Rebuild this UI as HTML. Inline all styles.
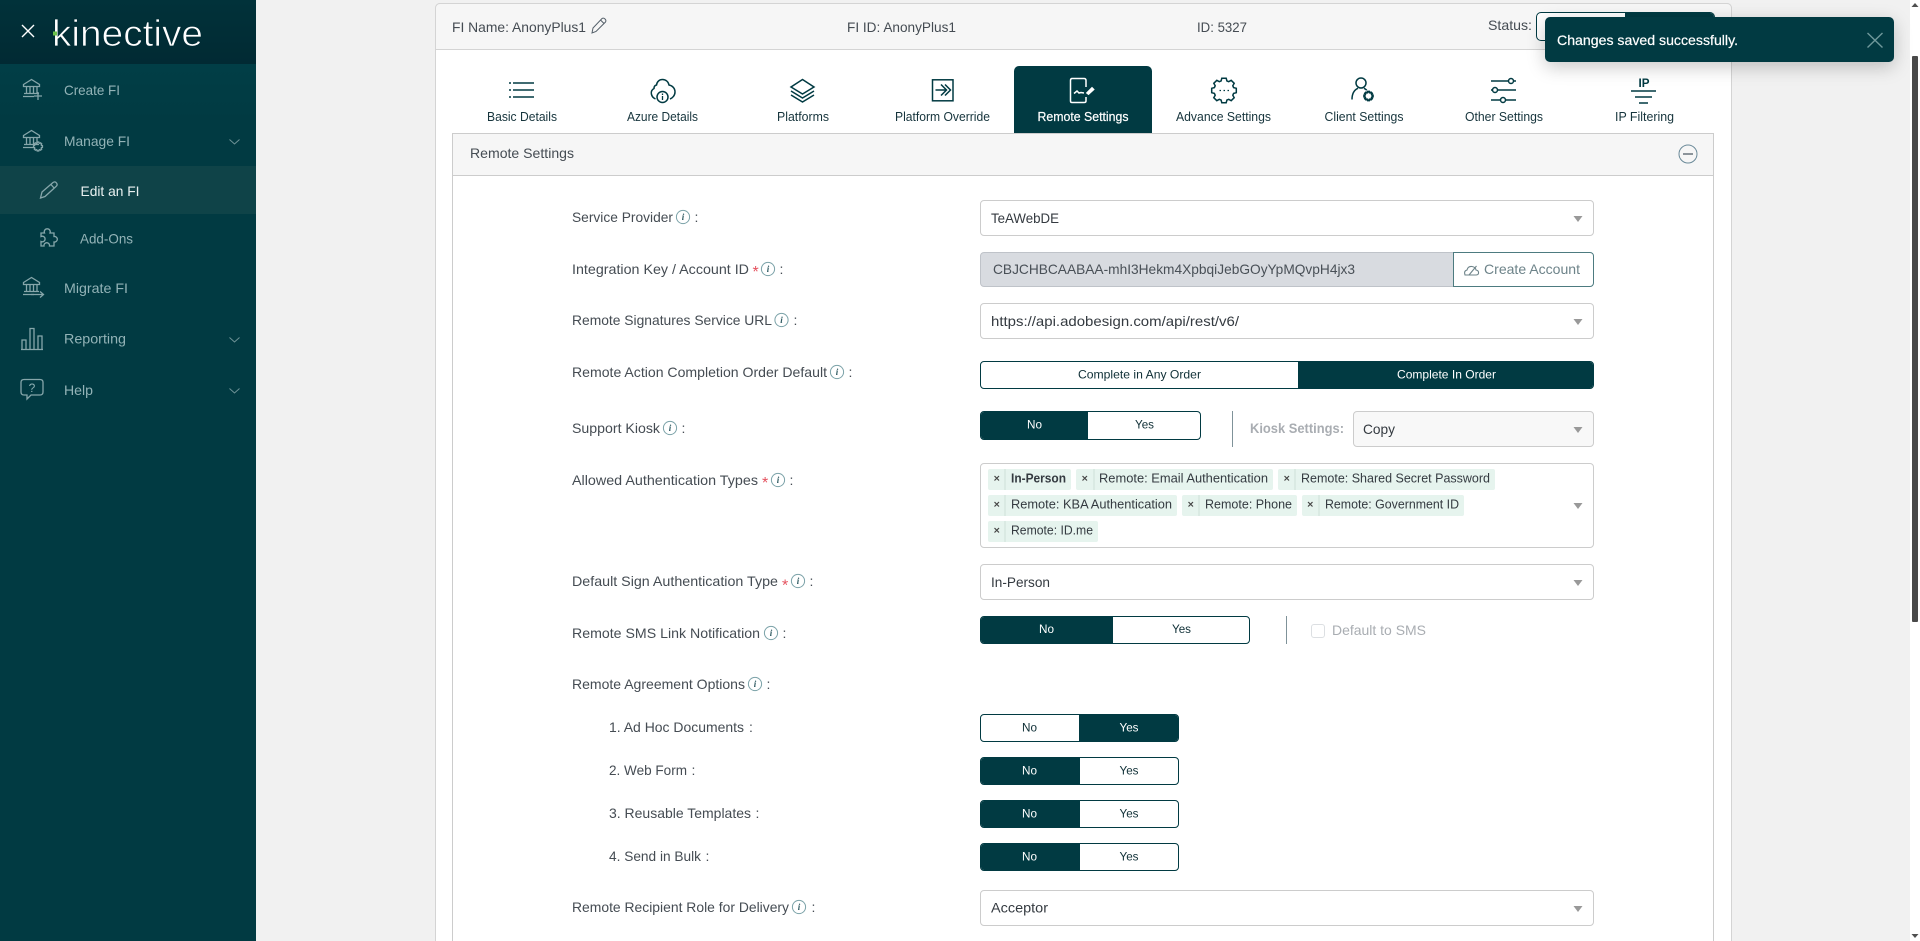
<!DOCTYPE html>
<html><head><meta charset="utf-8"><title>Kinective</title>
<style>
html,body{margin:0;padding:0;width:1920px;height:941px;overflow:hidden;background:#f1f1f1;font-family:"Liberation Sans",sans-serif}
#root{position:relative;width:1920px;height:941px;overflow:hidden;background:#f1f1f1}
.b{position:absolute;box-sizing:border-box}
.sel{border:1px solid #ccc;border-radius:4px;background:#fff;left:980px;width:614px;height:36px}
.tg{border:1px solid #013a42;border-radius:4px;background:#fff;overflow:hidden;height:28px}
.tg i{position:absolute;top:-1px;height:28px;background:#013a42;display:block}
svg{position:absolute;left:0;top:0}
text{font-family:"Liberation Sans",sans-serif}
.l text,text.l{font-size:14px;fill:#454c53}
.m text{font-size:14px;fill:#93b3b7}
.tab text{font-size:12.5px;fill:#16343c}
.tag text{font-size:12.5px;fill:#343a40}
.seg text{font-size:12px;fill:#0f2f36}
.v text{font-size:14px;fill:#343a40}
.ic{fill:none;stroke:#013a42;stroke-width:1.5}
.si{fill:none;stroke:#86a6aa;stroke-width:1.3}
</style></head><body><div id="root">
<!-- sidebar -->
<div class="b" style="left:0;top:0;width:256px;height:941px;background:#013a42"></div>
<div class="b" style="left:0;top:0;width:256px;height:64px;background:linear-gradient(#01323a,#012a33)"></div>
<div class="b" style="left:0;top:64px;width:256px;height:60px;background:linear-gradient(#013e46,#013a42)"></div>
<div class="b" style="left:0;top:166px;width:256px;height:48px;background:#0f4348"></div>
<!-- main -->
<div class="b" style="left:435px;top:3px;width:1297px;height:960px;background:#fff;border:1px solid #d4d4d4;border-radius:5px"></div>
<div class="b" style="left:435px;top:3px;width:1297px;height:47px;background:#f6f6f6;border:1px solid #d4d4d4;border-radius:5px 5px 0 0"></div>
<div class="b" style="left:1536px;top:12px;width:179px;height:29px;background:#fff;border:1px solid #013a42;border-radius:5px;overflow:hidden"><div class="b" style="left:88px;top:0;width:91px;height:29px;background:#013a42"></div></div>
<div class="b" style="left:1014px;top:66px;width:138px;height:68px;background:#013a42;border-radius:5px 5px 0 0"></div>
<div class="b" style="left:452px;top:133px;width:1262px;height:840px;background:#fff;border:1px solid #ccc"></div>
<div class="b" style="left:452px;top:133px;width:1262px;height:43px;background:#f6f6f6;border:1px solid #ccc"></div>
<!-- form boxes -->
<div class="b sel" style="top:200px"></div>
<div class="b" style="left:980px;top:252px;width:474px;height:35px;background:#d8dbe0;border:1px solid #bfc3c9;border-radius:4px 0 0 4px"></div>
<div class="b" style="left:1453px;top:252px;width:141px;height:35px;background:#fff;border:1px solid #4d7b80;border-radius:0 4px 4px 0"></div>
<div class="b sel" style="top:303px"></div>
<div class="b tg" style="left:980px;top:361px;width:614px"><i style="left:317px;width:297px"></i></div>
<div class="b tg" style="left:980px;top:411px;width:221px;height:29px"><i style="left:-1px;width:108px;height:29px"></i></div>
<div class="b" style="left:1232px;top:411px;width:1px;height:36px;background:#7f9299"></div>
<div class="b sel" style="left:1353px;top:411px;width:241px;background:#f8f8f8"></div>
<div class="b sel" style="top:463px;height:85px"></div>
<div class="b sel" style="top:564px"></div>
<div class="b tg" style="left:980px;top:616px;width:270px"><i style="left:-1px;width:133px"></i></div>
<div class="b" style="left:1286px;top:616px;width:1px;height:28px;background:#7f9299"></div>
<div class="b" style="left:1311px;top:624px;width:14px;height:14px;border:1px solid #dcdfe2;border-radius:3px;background:#fff"></div>
<div class="b tg" style="left:980px;top:714px;width:199px"><i style="left:98px;width:101px"></i></div>
<div class="b tg" style="left:980px;top:757px;width:199px"><i style="left:-1px;width:100px"></i></div>
<div class="b tg" style="left:980px;top:800px;width:199px"><i style="left:-1px;width:100px"></i></div>
<div class="b tg" style="left:980px;top:843px;width:199px"><i style="left:-1px;width:100px"></i></div>
<div class="b sel" style="top:890px"></div>
<!-- scrollbar -->
<div class="b" style="left:1910px;top:0;width:10px;height:941px;background:#fff"></div>
<div class="b" style="left:1912px;top:56px;width:6px;height:566px;background:#4a4a4a;border-radius:1px"></div>

<svg width="1920" height="941" viewBox="0 0 1920 941">
<defs>
<path id="gear" d="M12.3-2.2L12.3 2.2 9.6 2.9 8.8 4.7 10.2 7.2 7.2 10.2 4.7 8.8 2.9 9.6 2.2 12.3-2.2 12.3-2.9 9.6-4.7 8.8-7.2 10.2-10.2 7.2-8.8 4.7-9.6 2.9-12.3 2.2-12.3-2.2-9.6-2.9-8.8-4.7-10.2-7.2-7.2-10.2-4.7-8.8-2.9-9.6-2.2-12.3 2.2-12.3 2.9-9.6 4.7-8.8 7.2-10.2 10.2-7.2 8.8-4.7 9.6-2.9Z"/>
<g id="info"><circle cx="0" cy="0" r="6.6" fill="none" stroke="#7ba2a8" stroke-width="1"/><text x="0" y="3.2" text-anchor="middle" style="font:italic bold 9px 'Liberation Serif',serif;fill:#2f5a62">i</text></g>
<path id="arr" d="M-4.5-3H4.5L0 3Z" fill="#999"/>
<g id="bank"><path d="M23.5 6.5L31.5 1.5 39.5 6.5V8.5H23.5Z"/><path d="M26.5 8.5V15.5M30 8.5V15.5M33.5 8.5V15.5M37 8.5V15.5M24 15.5H39M23 18.5H34"/></g>
</defs>
<!-- sidebar content -->
<path d="M22 25L34 37M34 25L22 37" stroke="#fff" stroke-width="1.4" fill="none"/>
<text x="52" y="46" textLength="151" lengthAdjust="spacingAndGlyphs" style="font-size:37px;fill:#fff;stroke:#012c35;stroke-width:.8">kinective</text>
<rect x="53" y="31.5" width="4" height="4" fill="#6cc24a"/>
<g class="m">
<text x="64" y="95" textLength="56" lengthAdjust="spacingAndGlyphs">Create FI</text>
<text x="64" y="146" textLength="66" lengthAdjust="spacingAndGlyphs">Manage FI</text>
<text x="80.5" y="196" textLength="59" lengthAdjust="spacingAndGlyphs" style="fill:#e8f0f0">Edit an FI</text>
<text x="80" y="243.5" textLength="53" lengthAdjust="spacingAndGlyphs">Add-Ons</text>
<text x="64" y="293" textLength="64" lengthAdjust="spacingAndGlyphs">Migrate FI</text>
<text x="64" y="343.5" textLength="62" lengthAdjust="spacingAndGlyphs">Reporting</text>
<text x="64" y="395" textLength="29" lengthAdjust="spacingAndGlyphs">Help</text>
</g>
<use href="#bank" y="78" class="si"/><path class="si" d="M38 92V100M34 96H42"/>
<use href="#bank" y="129" class="si"/><use href="#gear" class="si" transform="translate(38 146.5) scale(.36)" style="stroke-width:3.8"/>
<use href="#bank" y="276" class="si"/><path class="si" d="M31 294.5H43M40 291.5L43.5 294.5 40 297.5"/>
<path class="si" d="M21 349.5H43M22 349V340H26V349M30 349V328.5H34V349M38 349V336H42V349"/>
<path class="si" d="M24 379.5H40Q43 379.5 43 382.5V392Q43 395 40 395H31L27 399V395H24Q21 395 21 392V382.5Q21 379.5 24 379.5Z"/>
<text x="32" y="392" text-anchor="middle" style="font-size:12px;fill:#8fb0b4">?</text>
<path class="si" d="M40.5 198L42 192 53 182.5Q55 181 56.5 183T56 186.5L45 196.5ZM51 184.5L54.5 188.5"/>
<path class="si" d="M41 233H44.5A3 3 0 1 1 50 233H54V236.5A2.8 2.8 0 1 1 54 242V246H49.500A2.8 2.8 0 1 0 44 246H41V241.5A2.8 2.8 0 1 0 41 236.500Z"/>
<path d="M229.5 139.5L234.5 144 239.5 139.5M229.5 337.5L234.5 342 239.5 337.5M229.5 388.5L234.5 393 239.5 388.5" fill="none" stroke="#6f9397" stroke-width="1"/>
<!-- header -->
<g class="l">
<text x="452" y="32" textLength="134" lengthAdjust="spacingAndGlyphs">FI Name: AnonyPlus1</text>
<text x="847" y="32" textLength="109" lengthAdjust="spacingAndGlyphs">FI ID: AnonyPlus1</text>
<text x="1197" y="32" textLength="50" lengthAdjust="spacingAndGlyphs">ID: 5327</text>
<text x="1488" y="30" textLength="44" lengthAdjust="spacingAndGlyphs">Status:</text>
<text x="470" y="158" textLength="104" lengthAdjust="spacingAndGlyphs">Remote Settings</text>
</g>
<path d="M592 33L593 28 602 18.5Q603.5 17.5 605 19T605.5 22L596 31.5ZM600.5 20L604 23.5" fill="none" stroke="#55606a" stroke-width="1"/>
<!-- tabs -->
<g class="tab">
<text x="487" y="121" textLength="70" lengthAdjust="spacingAndGlyphs">Basic Details</text>
<text x="627" y="121" textLength="71" lengthAdjust="spacingAndGlyphs">Azure Details</text>
<text x="777" y="121" textLength="52" lengthAdjust="spacingAndGlyphs">Platforms</text>
<text x="895" y="121" textLength="95" lengthAdjust="spacingAndGlyphs">Platform Override</text>
<text x="1037.5" y="121" textLength="91" lengthAdjust="spacingAndGlyphs" style="fill:#fff;stroke:#fff;stroke-width:.2">Remote Settings</text>
<text x="1176" y="121" textLength="95" lengthAdjust="spacingAndGlyphs">Advance Settings</text>
<text x="1324.5" y="121" textLength="79" lengthAdjust="spacingAndGlyphs">Client Settings</text>
<text x="1465" y="121" textLength="78" lengthAdjust="spacingAndGlyphs">Other Settings</text>
<text x="1615" y="121" textLength="59" lengthAdjust="spacingAndGlyphs">IP Filtering</text>
</g>
<path class="ic" d="M509 83H511M513 83H534M509 90H511M513 90H534M509 97H511M513 97H534"/>
<path class="ic" d="M655.5 99C651 97 649.5 91 654 88.5 654 86.5 655 85.3 656.5 85 657 81.5 659.5 79.5 662.5 79.5 666 79.5 668.5 82 669 85 672 85.5 675 88 675 92 675 95.5 672.5 98 670 99"/>
<circle class="ic" cx="662.5" cy="97" r="5.5"/><path class="ic" d="M662.5 96V100M662.5 93.5V95" style="stroke-width:1.3"/>
<path class="ic" d="M802.5 79.5L814 87 802.5 94 791 87ZM791 91L802.5 98 814 91M791 95L802.5 102 814 95"/>
<rect class="ic" x="932.5" y="79.8" width="20.5" height="21"/><path class="ic" d="M935.5 90H946M941 84.5L946.5 90 941 95.5M945 84.5L950.5 90 945 95.5"/>
<path class="ic" style="stroke:#fff" d="M1086 87V80.5Q1086 78.5 1084 78.5H1072Q1070.5 78.5 1070.5 80.5V101Q1070.5 102.5 1072 102.5H1084Q1086 102.5 1086 101V97M1074 93.5L1077 91 1079 93 1081 92.5 1084 93"/>
<path d="M1086.5 93L1092 87.5 1094 89.5 1088.5 94.5Z" fill="#fff" stroke="#fff"/>
<use href="#gear" class="ic" transform="translate(1224 90.5)"/>
<path d="M1219.5 90.5h1.5M1223.5 90.5h1.5M1227.5 90.5h1.5" stroke="#013a42" stroke-width="1.3"/>
<circle class="ic" cx="1361" cy="83" r="5"/><path class="ic" d="M1352 99.5C1352 93.5 1354.5 89.8 1358 88.3M1364 88.3C1365 88.8 1366 89.5 1366.8 90.2"/>
<use href="#gear" class="ic" transform="translate(1368.5 96) scale(.36)" style="stroke-width:5"/>
<path class="ic" d="M1491 81H1508.5M1513.5 81H1516M1491 90H1492.5M1497.5 90H1516M1491 100H1500.5M1505.5 100H1516"/>
<circle class="ic" cx="1511" cy="81" r="2.5"/><circle class="ic" cx="1495" cy="90" r="2.5"/><circle class="ic" cx="1503" cy="100" r="2.5"/>
<text x="1644" y="87" text-anchor="middle" textLength="11" lengthAdjust="spacingAndGlyphs" style="font-size:11.5px;font-weight:bold;fill:#013a42">IP</text>
<path d="M1631 91H1656M1635 97H1652M1639 103H1648" stroke="#013a42" stroke-width="1.5" fill="none"/>
<circle cx="1688" cy="154" r="9" fill="none" stroke="#6b8a99" stroke-width="1"/><path d="M1683 154H1693" stroke="#808a90" stroke-width="1.8"/>
<g transform="translate(0,-1)">
<!-- labels -->
<g class="l">
<text x="572" y="223" textLength="101" lengthAdjust="spacingAndGlyphs">Service Provider</text><text x="694.5" y="223">:</text>
<text x="572" y="275" textLength="177" lengthAdjust="spacingAndGlyphs">Integration Key / Account ID</text><text x="779.5" y="275">:</text>
<text x="572" y="326" textLength="200" lengthAdjust="spacingAndGlyphs">Remote Signatures Service URL</text><text x="793.5" y="326">:</text>
<text x="572" y="378" textLength="255" lengthAdjust="spacingAndGlyphs">Remote Action Completion Order Default</text><text x="848.5" y="378">:</text>
<text x="572" y="434" textLength="88" lengthAdjust="spacingAndGlyphs">Support Kiosk</text><text x="681.5" y="434">:</text>
<text x="572" y="486" textLength="186" lengthAdjust="spacingAndGlyphs">Allowed Authentication Types</text><text x="789.5" y="486">:</text>
<text x="572" y="587" textLength="206" lengthAdjust="spacingAndGlyphs">Default Sign Authentication Type</text><text x="809.5" y="587">:</text>
<text x="572" y="639" textLength="188" lengthAdjust="spacingAndGlyphs">Remote SMS Link Notification</text><text x="782.5" y="639">:</text>
<text x="572" y="690" textLength="173" lengthAdjust="spacingAndGlyphs">Remote Agreement Options</text><text x="766.5" y="690">:</text>
<text x="609" y="733" textLength="135" lengthAdjust="spacingAndGlyphs">1. Ad Hoc Documents</text><text x="749" y="733">:</text>
<text x="609" y="776" textLength="78" lengthAdjust="spacingAndGlyphs">2. Web Form</text><text x="691.5" y="776">:</text>
<text x="609" y="819" textLength="142" lengthAdjust="spacingAndGlyphs">3. Reusable Templates</text><text x="755.5" y="819">:</text>
<text x="609" y="862" textLength="92" lengthAdjust="spacingAndGlyphs">4. Send in Bulk</text><text x="705.5" y="862">:</text>
<text x="572" y="913" textLength="217" lengthAdjust="spacingAndGlyphs">Remote Recipient Role for Delivery</text><text x="811.5" y="913">:</text>
</g>
<text x="752.5" y="278" style="font-size:16px;fill:#e4505d">*</text>
<text x="762" y="489" style="font-size:16px;fill:#e4505d">*</text>
<text x="782" y="591.500" style="font-size:16px;fill:#e4505d">*</text>
<!-- values -->
<g class="v">
<text x="991" y="224" textLength="68" lengthAdjust="spacingAndGlyphs">TeAWebDE</text>
<text x="993" y="275" textLength="362" lengthAdjust="spacingAndGlyphs" style="fill:#495057">CBJCHBCAABAA-mhI3Hekm4XpbqiJebGOyYpMQvpH4jx3</text>
<text x="991" y="327" textLength="248" lengthAdjust="spacingAndGlyphs">https://api.adobesign.com/api/rest/v6/</text>
<text x="1363" y="435" textLength="32" lengthAdjust="spacingAndGlyphs">Copy</text>
<text x="991" y="588" textLength="59" lengthAdjust="spacingAndGlyphs">In-Person</text>
<text x="991" y="913.5" textLength="57" lengthAdjust="spacingAndGlyphs">Acceptor</text>
<text x="1484" y="275" textLength="96" lengthAdjust="spacingAndGlyphs" style="fill:#6d8389">Create Account</text>
<text x="1250" y="434" textLength="94" lengthAdjust="spacingAndGlyphs" style="fill:#a9adb2;font-weight:bold">Kiosk Settings:</text>
<text x="1332" y="636" textLength="94" lengthAdjust="spacingAndGlyphs" style="fill:#a9adb2">Default to SMS</text>
</g>
<!-- segments -->
<g class="seg">
<text x="1078" y="379.5" textLength="123" lengthAdjust="spacingAndGlyphs">Complete in Any Order</text>
<text x="1397" y="379.5" textLength="99" lengthAdjust="spacingAndGlyphs" style="fill:#fff">Complete In Order</text>
<text x="1027" y="429.5" textLength="15" lengthAdjust="spacingAndGlyphs" style="fill:#fff">No</text>
<text x="1135" y="429.5" textLength="19" lengthAdjust="spacingAndGlyphs">Yes</text>
<text x="1039" y="634" textLength="15" lengthAdjust="spacingAndGlyphs" style="fill:#fff">No</text>
<text x="1172" y="634" textLength="19" lengthAdjust="spacingAndGlyphs">Yes</text>
<text x="1022" y="732.5" textLength="15" lengthAdjust="spacingAndGlyphs">No</text>
<text x="1119.5" y="732.5" textLength="19" lengthAdjust="spacingAndGlyphs" style="fill:#fff">Yes</text>
<text x="1022" y="775.5" textLength="15" lengthAdjust="spacingAndGlyphs" style="fill:#fff">No</text>
<text x="1119.5" y="775.5" textLength="19" lengthAdjust="spacingAndGlyphs">Yes</text>
<text x="1022" y="818.5" textLength="15" lengthAdjust="spacingAndGlyphs" style="fill:#fff">No</text>
<text x="1119.5" y="818.5" textLength="19" lengthAdjust="spacingAndGlyphs">Yes</text>
<text x="1022" y="861.5" textLength="15" lengthAdjust="spacingAndGlyphs" style="fill:#fff">No</text>
<text x="1119.5" y="861.5" textLength="19" lengthAdjust="spacingAndGlyphs">Yes</text>
</g>
</g>
<use href="#info" x="683" y="217"/><use href="#info" x="768" y="269"/><use href="#info" x="781.5" y="320"/><use href="#info" x="837" y="372"/><use href="#info" x="670" y="428"/><use href="#info" x="778" y="480"/><use href="#info" x="798" y="581"/><use href="#info" x="771" y="633"/><use href="#info" x="755" y="684"/><use href="#info" x="799" y="907"/>
<path d="M1465 275Q1463.5 271 1467 270 1468 266 1472 266.5 1475.5 267 1476 270 1479 270.5 1478.5 273.5 1478 275 1476 275ZM1469 275L1476.5 266" fill="none" stroke="#6d8389" stroke-width="1.1"/>
<use href="#arr" x="1578" y="219"/><use href="#arr" x="1578" y="322"/><use href="#arr" x="1578" y="430"/><use href="#arr" x="1578" y="506"/><use href="#arr" x="1578" y="583"/><use href="#arr" x="1578" y="909"/>
<!-- tags -->
<g fill="#e6f4ee">
<rect x="988" y="469" width="83" height="21" rx="2"/><rect x="1076" y="469" width="197" height="21" rx="2"/><rect x="1278" y="469" width="217" height="21" rx="2"/>
<rect x="988" y="495" width="189" height="21" rx="2"/><rect x="1182" y="495" width="115" height="21" rx="2"/><rect x="1302" y="495" width="162" height="21" rx="2"/>
<rect x="988" y="521" width="110" height="21" rx="2"/>
</g>
<path d="M1005 469V490M1094 469V490M1295 469V490M1005 495V516M1199 495V516M1319 495V516M1005 521V542" stroke="#cfe0d8" stroke-width="1"/>
<g class="tag" transform="translate(0,-1)">
<text x="1011" y="483.5" textLength="55" lengthAdjust="spacingAndGlyphs" style="font-weight:bold">In-Person</text>
<text x="1099" y="483.5" textLength="169" lengthAdjust="spacingAndGlyphs">Remote: Email Authentication</text>
<text x="1301" y="483.5" textLength="189" lengthAdjust="spacingAndGlyphs">Remote: Shared Secret Password</text>
<text x="1011" y="509.5" textLength="161" lengthAdjust="spacingAndGlyphs">Remote: KBA Authentication</text>
<text x="1205" y="509.5" textLength="87" lengthAdjust="spacingAndGlyphs">Remote: Phone</text>
<text x="1325" y="509.5" textLength="134" lengthAdjust="spacingAndGlyphs">Remote: Government ID</text>
<text x="1011" y="535.5" textLength="82" lengthAdjust="spacingAndGlyphs">Remote: ID.me</text>
</g>
<path d="M994.5 477L999 481.5M999 477L994.5 481.5M1082.5 477L1087 481.5M1087 477L1082.5 481.5M1284.5 477L1289 481.5M1289 477L1284.5 481.5M994.5 503L999 507.5M999 503L994.5 507.5M1188.5 503L1193 507.5M1193 503L1188.5 507.5M1308 503L1312.5 507.5M1312.5 503L1308 507.5M994.5 529L999 533.5M999 529L994.5 533.5" stroke="#444" stroke-width="1.2" fill="none" transform="translate(0,-1)"/>
<!-- scroll arrows -->
<path d="M1915 3L1918.5 7H1911.5ZM1911.5 934H1918.5L1915 938Z" fill="#505050"/>
</svg>
<!-- toast -->
<div class="b" style="left:1545px;top:17px;width:349px;height:45px;background:#013a42;border-radius:5px;box-shadow:0 5px 18px rgba(0,0,0,.22)"></div>
<svg width="1920" height="941" viewBox="0 0 1920 941">
<text x="1557" y="45" textLength="181" lengthAdjust="spacingAndGlyphs" style="font-size:14px;fill:#fff;stroke:#fff;stroke-width:.2">Changes saved successfully.</text>
<path d="M1867.5 33L1882.5 47.5M1882.5 33L1867.5 47.5" stroke="#6f989b" stroke-width="1.4" fill="none"/>
</svg>
</div></body></html>
